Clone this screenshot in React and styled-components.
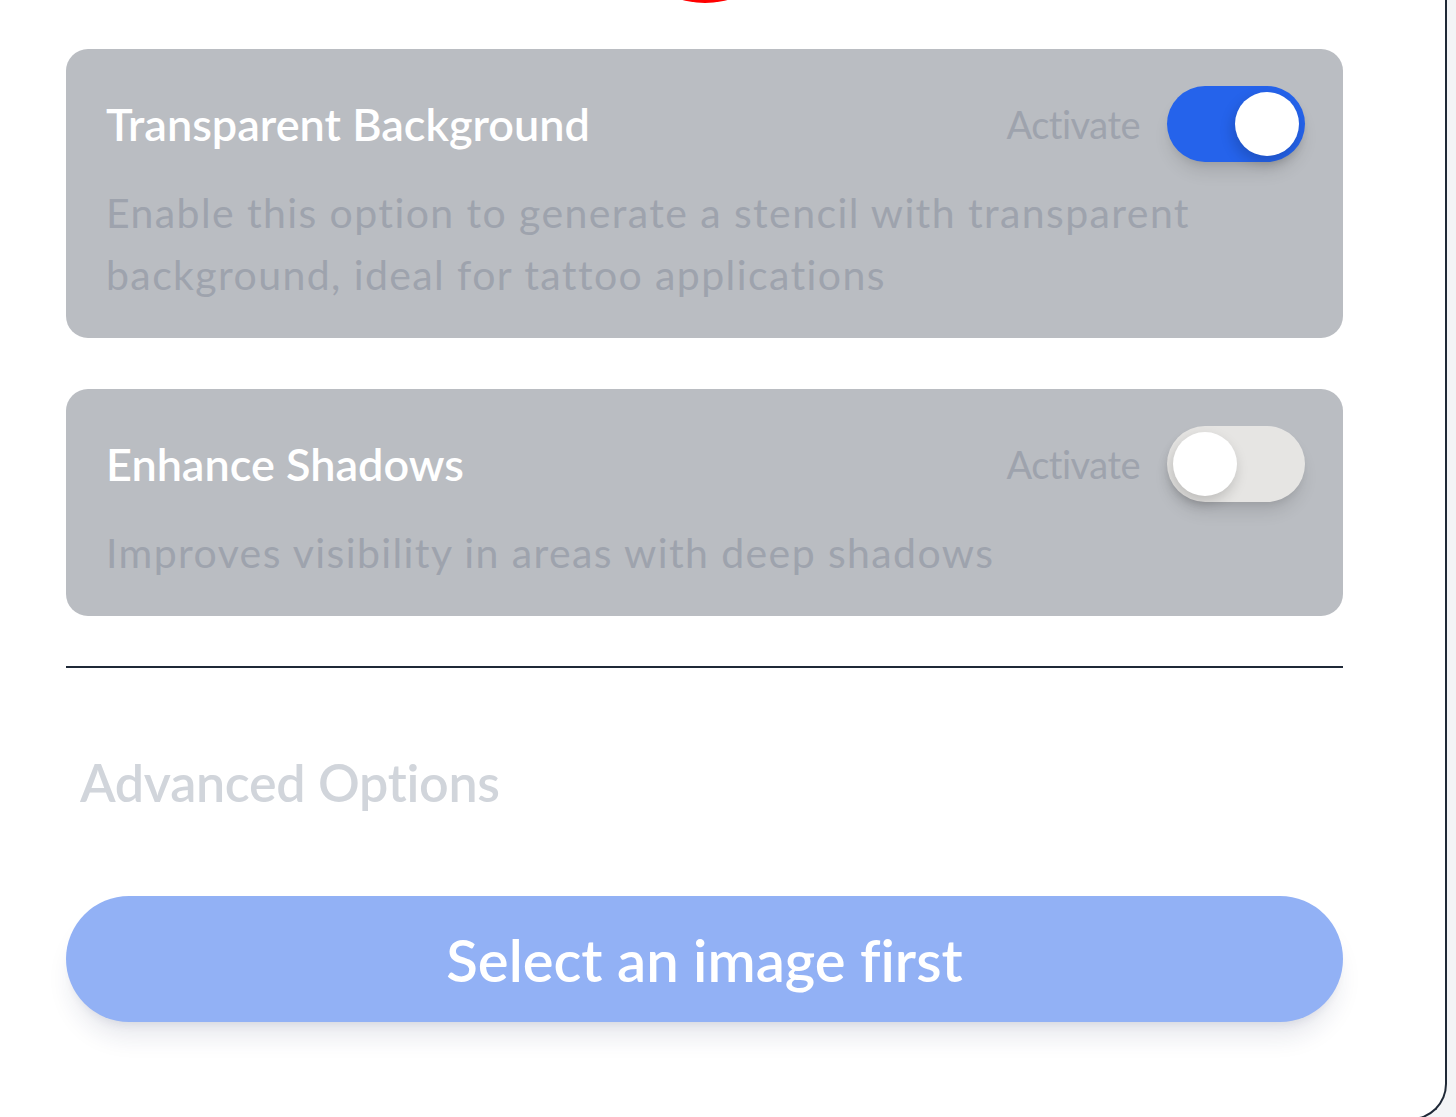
import styled, { createGlobalStyle } from "styled-components";

const GlobalStyle = createGlobalStyle`
  html, body {
    margin: 0;
    height: 1117px;
    overflow: hidden;
    background: #f3f4f6;
  }

  * {
    box-sizing: border-box;
    font-family: "Lato", "Open Sans", sans-serif;
    font-variant-ligatures: none;
  }
`;

const Frame = styled.main`
  width: 1487px;
  height: 1120px;
  margin-left: -40px;
  padding: 0 102px 0 104px;
  background: #fff;
  border: 2px solid #1f2937;
  border-top: none;
  border-radius: 0 0 36px 36px;
  display: flex;
  flex-direction: column;
`;

const Mark = styled.div`
  width: 172px;
  height: 172px;
  margin: -169px auto 0;
  border-radius: 50%;
  background: #ff0000;
`;

const Options = styled.section`
  margin-top: 46px;
  display: flex;
  flex-direction: column;
  gap: 51px;
`;

const OptionCard = styled.div`
  background: #babdc2;
  border-radius: 22px;
  padding: 37px 38px 32px 40px;
`;

const OptionHeader = styled.div`
  height: 76px;
  display: flex;
  align-items: center;
  justify-content: space-between;
  margin-bottom: 20px;
`;

const OptionTitle = styled.h3`
  margin: 0;
  font-size: 45px;
  font-weight: 600;
  color: #fff;
`;

const ToggleGroup = styled.label`
  display: flex;
  align-items: center;
  gap: 27px;
  font-size: 38px;
  letter-spacing: -0.5px;
  color: #9ea3ad;
`;

const Track = styled.span`
  width: 138px;
  height: 76px;
  padding: 6px;
  border-radius: 38px;
  display: flex;
  justify-content: ${(p) => (p.$on ? "flex-end" : "flex-start")};
  background: ${(p) => (p.$on ? "#2563eb" : "#e6e5e3")};
  box-shadow: 0 12px 18px -4px rgba(0, 0, 0, 0.12),
    0 4px 8px -4px rgba(0, 0, 0, 0.1);
`;

const Knob = styled.span`
  width: 64px;
  height: 64px;
  border-radius: 50%;
  background: #fff;
  box-shadow: -2px 6px 14px rgba(0, 0, 0, 0.18);
`;

const OptionText = styled.p`
  margin: 0;
  font-size: 41px;
  letter-spacing: 1.4px;
  line-height: 62px;
  color: #9ea3ad;
`;

const Divider = styled.hr`
  margin: 50px 0 0;
  border: none;
  height: 2px;
  background: #1f2937;
`;

const AdvancedRow = styled.div`
  height: 228px;
  display: flex;
  align-items: center;
  padding-left: 14px;
`;

const AdvancedTitle = styled.span`
  font-size: 52px;
  font-weight: 600;
  letter-spacing: -0.3px;
  color: #d1d5db;
`;

const SubmitButton = styled.button`
  height: 126px;
  border: none;
  border-radius: 63px;
  background: #92b1f5;
  color: #fff;
  font-size: 58px;
  font-weight: 600;
  box-shadow: 0 20px 25px -5px rgba(30, 41, 90, 0.1),
    0 8px 10px -6px rgba(30, 41, 90, 0.1);
`;

const options = [
  {
    title: "Transparent Background",
    text: "Enable this option to generate a stencil with transparent background, ideal for tattoo applications",
    on: true,
  },
  {
    title: "Enhance Shadows",
    text: "Improves visibility in areas with deep shadows",
    on: false,
  },
];

const App = () => {
  return (
    <>
      <GlobalStyle />
      <Frame>
        <Mark />
        <Options>
          {options.map((o) => (
            <OptionCard key={o.title}>
              <OptionHeader>
                <OptionTitle>{o.title}</OptionTitle>
                <ToggleGroup>
                  Activate
                  <Track $on={o.on}>
                    <Knob />
                  </Track>
                </ToggleGroup>
              </OptionHeader>
              <OptionText>{o.text}</OptionText>
            </OptionCard>
          ))}
        </Options>
        <Divider />
        <AdvancedRow>
          <AdvancedTitle>Advanced Options</AdvancedTitle>
        </AdvancedRow>
        <SubmitButton disabled>Select an image first</SubmitButton>
      </Frame>
    </>
  );
};

export default App;
